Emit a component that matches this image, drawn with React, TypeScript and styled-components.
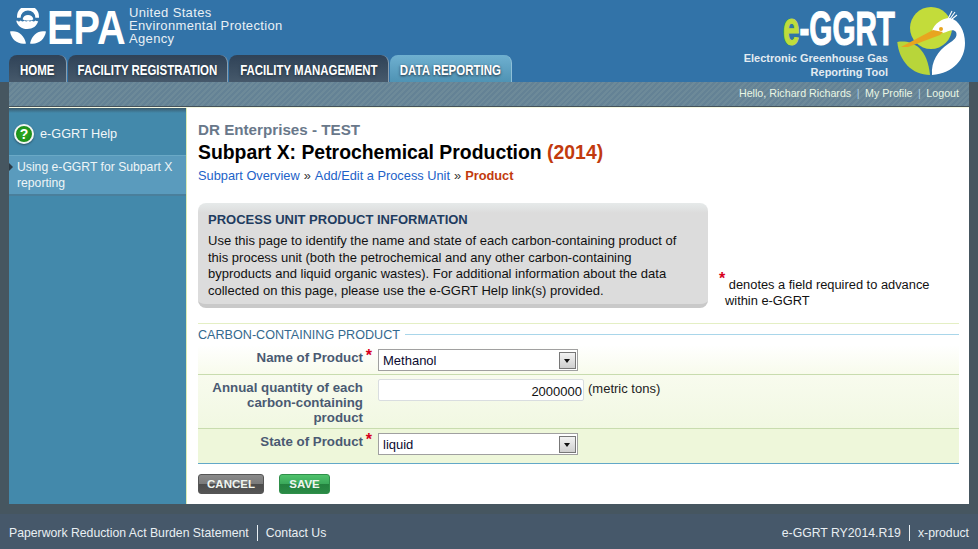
import React from "react";
import styled, { createGlobalStyle } from "styled-components";

const GlobalStyle = createGlobalStyle`
	html, body {
		margin: 0;
		padding: 0;
		background: #465660;
		font-family: "Liberation Sans", Arial, sans-serif;
	}
	* {
		box-sizing: border-box;
	}
`;

const EpaLogo = () => (
	<svg width="120" height="40" viewBox="0 0 120 40">
		<g fill="#fff">
			<path d="M7 8.600a11 11 0 0 1 22 0v1.200h-3.600a7.400 7.400 0 0 0-14.800 0H7Z" />
			<path d="M12.600 11.200a5.600 5.600 0 0 1 10.800 0c-1.600 1-3.400 1.400-5.400 1.400s-3.800-.4-5.400-1.400Z" />
			<path d="M7 12.500c1.500 1.200 2.200 1.200 3.700 0 1.500 1.200 2.300 1.200 3.700 0 1.500 1.200 2.300 1.200 3.700 0 1.500 1.200 2.300 1.200 3.700 0 1.500 1.200 2.300 1.200 3.700 0 1 .8 1.700 1 2.700.6-1.100 5-5.500 8-11 8s-10-3.300-11-8.600c.6.300 1 .2 1.500 0Z" />
			<path d="M0 23.500c7-1.700 14 2.500 16 12-8 1.300-14.500-3.500-16-12Z" />
			<path d="M36 23.500c-7-1.700-14 2.500-16 12 8 1.300 14.500-3.500 16-12Z" />
		</g>
		<text transform="translate(37 35.500) scale(0.81 1)" fontFamily="Liberation Sans" fontWeight="700" fontSize="49" fill="#fff">
			EPA
		</text>
	</svg>
);

const GgrtLogo = () => (
	<svg width="114" height="40" viewBox="0 0 114 40">
		<text transform="translate(1 37) scale(0.605 1)" fontFamily="Liberation Sans" fontWeight="700" fontSize="49" fill="#fff" stroke="#fff" strokeWidth="1.200">
			<tspan fill="#bfdc3c" stroke="#bfdc3c">e</tspan>-GGRT
		</text>
	</svg>
);

const CraneLogo = () => (
	<svg width="82" height="72" viewBox="0 0 82 72">
		<circle cx="35" cy="21" r="21" fill="#c3dc3a" />
		<path d="M1.300 35C14 33 31 38 34 68 16 68 3 54 1.300 35Z" fill="#b8d53a" />
		<path d="M36 68C35 54 42 44 52 37 58 33 62 30 60 25 57 21 52 25 47 26L36 24C38 17 46 11 54 11 63 13 69 24 69 36 69 52 58 66 36 68Z" fill="#fff" />
		<path d="M5 40 37 23 47 25 44 28 12 40Z" fill="#e8a51f" />
		<circle cx="45" cy="22" r="2" fill="#e8a51f" />
		<path d="M52 12 56 4M54 12 59 5M56 12 61 8" stroke="#fff" strokeWidth="1.100" fill="none" />
	</svg>
);

const App = () => {
	return (
		<Page>
			<GlobalStyle />
			<Header>
				<HeaderLeft>
					<AgencyRow>
						<EpaLogo />
						<AgencyName>
							United States
							<br />
							Environmental Protection
							<br />
							Agency
						</AgencyName>
					</AgencyRow>
					<Tabs>
						<Tab $width={58}>
							<TabLabel>HOME</TabLabel>
						</Tab>
						<Tab $width={160}>
							<TabLabel>FACILITY REGISTRATION</TabLabel>
						</Tab>
						<Tab $width={160}>
							<TabLabel>FACILITY MANAGEMENT</TabLabel>
						</Tab>
						<Tab $width={122} $active>
							<TabLabel>DATA REPORTING</TabLabel>
						</Tab>
					</Tabs>
				</HeaderLeft>
				<ToolBrand>
					<GgrtLogo />
					<ToolName>
						Electronic Greenhouse Gas
						<br />
						Reporting Tool
					</ToolName>
				</ToolBrand>
				<CraneWrap>
					<CraneLogo />
				</CraneWrap>
			</Header>

			<UserBar>
				<UserLink>Hello, Richard Richards</UserLink>
				<UserSep>|</UserSep>
				<UserLink>My Profile</UserLink>
				<UserSep>|</UserSep>
				<UserLink>Logout</UserLink>
			</UserBar>

			<Main>
				<Sidebar>
					<HelpRow>
						<HelpIcon>?</HelpIcon>
						<HelpTitle>e-GGRT Help</HelpTitle>
					</HelpRow>
					<HelpItem>Using e-GGRT for Subpart X reporting</HelpItem>
				</Sidebar>

				<Content>
					<Company>DR Enterprises - TEST</Company>
					<Title>
						Subpart X: Petrochemical Production <Year>(2014)</Year>
					</Title>
					<Crumbs>
						<CrumbLink>Subpart Overview</CrumbLink>
						<CrumbSep>»</CrumbSep>
						<CrumbLink>Add/Edit a Process Unit</CrumbLink>
						<CrumbSep>»</CrumbSep>
						<CrumbCurrent>Product</CrumbCurrent>
					</Crumbs>

					<InfoRow>
						<InfoBox>
							<InfoTitle>PROCESS UNIT PRODUCT INFORMATION</InfoTitle>
							<InfoText>
								Use this page to identify the name and state of each carbon-containing product of
								<br />
								this process unit (both the petrochemical and any other carbon-containing
								<br />
								byproducts and liquid organic wastes). For additional information about the data
								<br />
								collected on this page, please use the e-GGRT Help link(s) provided.
							</InfoText>
						</InfoBox>
						<RequiredNote>
							<NoteStar>*</NoteStar> denotes a field required to advance
							<br />
							within e-GGRT
						</RequiredNote>
					</InfoRow>

					<Section>
						<Legend>
							<LegendText>CARBON-CONTAINING PRODUCT</LegendText>
							<LegendLine />
						</Legend>
						<FormRow $height={30} $tone="first">
							<FieldLabel>
								Name of Product<Star>*</Star>
							</FieldLabel>
							<SelectBox>
								<SelectValue>Methanol</SelectValue>
								<SelectArrow />
							</SelectBox>
						</FormRow>
						<FormRow $height={54} $tone="middle">
							<FieldLabel>Annual quantity of each carbon-containing product</FieldLabel>
							<QuantityInput defaultValue="2000000" readOnly />
							<Unit>(metric tons)</Unit>
						</FormRow>
						<FormRow $height={35} $tone="last">
							<FieldLabel>
								State of Product<Star>*</Star>
							</FieldLabel>
							<SelectBox>
								<SelectValue>liquid</SelectValue>
								<SelectArrow />
							</SelectBox>
						</FormRow>
					</Section>

					<Buttons>
						<ActionButton $width={66}>CANCEL</ActionButton>
						<ActionButton $width={51} $save>
							SAVE
						</ActionButton>
					</Buttons>
				</Content>
			</Main>

			<Footer>
				<FooterGroup>
					<FooterLink>Paperwork Reduction Act Burden Statement</FooterLink>
					<FooterSep />
					<FooterLink>Contact Us</FooterLink>
				</FooterGroup>
				<FooterGroup>
					<FooterLink>e-GGRT RY2014.R19</FooterLink>
					<FooterSep />
					<FooterLink>x-product</FooterLink>
				</FooterGroup>
			</Footer>
		</Page>
	);
};

export default App;

const Page = styled.div`
	width: 978px;
	height: 549px;
	overflow: hidden;
	display: flex;
	flex-direction: column;
	background: #465660;
`;

const Header = styled.div`
	height: 82px;
	flex: none;
	display: flex;
	background: #3273a8;
	padding-left: 9px;
`;

const HeaderLeft = styled.div`
	width: 730px;
	flex: none;
	display: flex;
	flex-direction: column;
	justify-content: space-between;
`;

const AgencyRow = styled.div`
	display: flex;
	padding: 8px 0 0 1px;
`;

const AgencyName = styled.div`
	margin: -2px 0 0 -1px;
	font-size: 13px;
	line-height: 13px;
	letter-spacing: 0.35px;
	color: #e9f0f5;
`;

const Tabs = styled.div`
	display: flex;
	gap: 1px;
`;

const Tab = styled.div<{ $width: number; $active?: boolean }>`
	width: ${(p) => p.$width}px;
	height: 27px;
	padding-top: 2px;
	display: flex;
	align-items: center;
	justify-content: center;
	border-radius: 8px 8px 0 0;
	border-right: 1px solid ${(p) => (p.$active ? "#8fc0d8" : "#8a9eae")};
	background: ${(p) =>
		p.$active
			? "linear-gradient(#6fb0d0, #4f93b4)"
			: "linear-gradient(#2f4257, #46596b)"};
`;

const TabLabel = styled.span`
	flex: none;
	transform: scaleX(0.74);
	color: #fff;
	font-size: 15.500px;
	font-weight: 700;
	white-space: nowrap;
	text-shadow: 0 1px 3px #1c2c3a;
`;

const ToolBrand = styled.div`
	width: 150px;
	flex: none;
	padding-top: 8px;
	display: flex;
	flex-direction: column;
	align-items: flex-end;

	svg {
		margin-right: -7px;
		flex: none;
	}
`;

const ToolName = styled.div`
	margin-top: 3px;
	margin-right: 1px;
	text-align: right;
	font-size: 11px;
	font-weight: 700;
	line-height: 14px;
	white-space: nowrap;
	color: #e3ebf1;
`;

const CraneWrap = styled.div`
	margin-left: 7px;
	padding-top: 7px;
`;

const UserBar = styled.div`
	height: 25px;
	flex: none;
	margin: 0 9px;
	padding: 0 10px 2px 0;
	display: flex;
	align-items: center;
	justify-content: flex-end;
	gap: 5.500px;
	border-bottom: 1px solid #44525a;
	background: repeating-linear-gradient(135deg, #6d8a99 0 2px, #648295 2px 4px);
	font-size: 10.700px;
`;

const UserLink = styled.span`
	color: #e9f6e4;
`;

const UserSep = styled.span`
	color: #a7d0e6;
`;

const Main = styled.div`
	height: 397px;
	flex: none;
	margin: 0 9px;
	display: flex;
	border-top: 1px solid #f4f8e2;
	background: #fff;
`;

const Sidebar = styled.div`
	width: 178px;
	flex: none;
	border-right: 1px solid #dcebb4;
	background: linear-gradient(#3a5a6c 0, #4389ab 5px, #4389ab 100%);
`;

const HelpRow = styled.div`
	height: 47px;
	padding: 4px 0 0 5px;
	display: flex;
	align-items: center;
	gap: 6px;
`;

const HelpIcon = styled.div`
	width: 20px;
	height: 20px;
	display: flex;
	align-items: center;
	justify-content: center;
	border: 2px solid #f2f5f2;
	border-radius: 50%;
	background: radial-gradient(#36b024, #0f7f14);
	box-shadow: 0 1px 2px #2a4f60;
	color: #fff;
	font-size: 14px;
	font-weight: 700;
`;

const HelpTitle = styled.div`
	color: #f2f7f8;
	font-size: 12.700px;
`;

const HelpItem = styled.div`
	position: relative;
	height: 41px;
	padding: 3px 10px 0 8px;
	border-top: 1px solid #6aa9c6;
	border-bottom: 2px solid #4a7f9b;
	background: #5a9bbd;
	color: #eef5f7;
	font-size: 12.200px;
	line-height: 16px;

	&::before {
		content: "";
		position: absolute;
		left: 0;
		top: 7px;
		border: 4px solid transparent;
		border-left-color: #2c3a44;
	}
`;

const Content = styled.div`
	flex: 1;
	min-width: 0;
	padding: 14px 10px 0 11px;
`;

const Company = styled.div`
	color: #69788a;
	font-size: 15.200px;
	font-weight: 700;
	line-height: 16px;
`;

const Title = styled.div`
	margin-top: 3px;
	color: #000;
	font-size: 19.400px;
	font-weight: 700;
	line-height: 23px;
	white-space: nowrap;
`;

const Year = styled.span`
	color: #c23a0e;
`;

const Crumbs = styled.div`
	margin-top: 4px;
	display: flex;
	align-items: center;
	gap: 4px;
	font-size: 12.800px;
	line-height: 16px;
`;

const CrumbLink = styled.span`
	color: #1c62c8;
`;

const CrumbSep = styled.span`
	color: #333;
`;

const CrumbCurrent = styled.span`
	color: #c23a0e;
	font-weight: 700;
`;

const InfoRow = styled.div`
	margin-top: 19px;
	display: flex;
	align-items: flex-end;
`;

const InfoBox = styled.div`
	width: 510px;
	height: 105px;
	flex: none;
	padding: 9px 10px 0;
	border-radius: 8px;
	border-bottom: 4px solid #c9c9c9;
	background: linear-gradient(#e6eaea, #dcdcdc 10px);
`;

const InfoTitle = styled.div`
	color: #1f3c60;
	font-size: 13px;
	font-weight: 700;
	line-height: 16px;
`;

const InfoText = styled.div`
	margin-top: 5px;
	color: #111;
	font-size: 13px;
	line-height: 16.600px;
	white-space: nowrap;
`;

const RequiredNote = styled.div`
	margin: 0 0 -1px 11px;
	padding-left: 6px;
	color: #111;
	font-size: 12.850px;
	line-height: 16px;
	text-indent: -6px;
`;

const NoteStar = styled.span`
	position: relative;
	top: -5px;
	color: #d8001c;
	font-size: 16px;
	font-weight: 700;
	line-height: 0;
`;

const Section = styled.div`
	margin-top: 15px;
	border-top: 1px solid #e4efc4;
`;

const Legend = styled.div`
	height: 21px;
	display: flex;
	align-items: center;
	gap: 5px;
`;

const LegendText = styled.div`
	color: #34698e;
	font-size: 12.600px;
	white-space: nowrap;
`;

const LegendLine = styled.div`
	flex: 1;
	height: 1px;
	background: #a9d6ea;
`;

const rowBackgrounds = {
	first: "linear-gradient(#fff, #f8fbec)",
	middle: "linear-gradient(#f8fbee, #f1f8e2)",
	last: "#eef7da",
};

const FormRow = styled.div<{ $height: number; $tone: "first" | "middle" | "last" }>`
	height: ${(p) => p.$height}px;
	padding-top: 4px;
	display: flex;
	align-items: flex-start;
	border-bottom: 1px solid ${(p) => (p.$tone === "last" ? "#62a8c8" : "#c8dcae")};
	background: ${(p) => rowBackgrounds[p.$tone]};
`;

const FieldLabel = styled.div`
	position: relative;
	width: 165px;
	flex: none;
	margin-right: 15px;
	padding-top: 1px;
	color: #4a5a72;
	font-size: 13.300px;
	font-weight: 700;
	line-height: 15px;
	text-align: right;
`;

const Star = styled.span`
	position: absolute;
	right: -9px;
	top: -1px;
	color: #d8001c;
	font-size: 16px;
`;

const SelectBox = styled.div`
	width: 200px;
	height: 22px;
	flex: none;
	display: flex;
	align-items: center;
	padding: 0 1px 0 4px;
	border: 1px solid #a0a0a0;
	background: #fff;
`;

const SelectValue = styled.div`
	flex: 1;
	color: #0a0a30;
	font-size: 13px;
`;

const SelectArrow = styled.div`
	position: relative;
	width: 17px;
	height: 17px;
	border: 1px solid #777;
	background: linear-gradient(#f2f2f2, #cfcfcf);

	&::after {
		content: "";
		position: absolute;
		left: 4px;
		top: 6px;
		border: 3.500px solid transparent;
		border-top: 4px solid #111;
		border-bottom: 0;
	}
`;

const QuantityInput = styled.input`
	width: 206px;
	height: 22px;
	flex: none;
	padding: 2px 1px 0 0;
	border: 1px solid #d9dde0;
	border-radius: 2px;
	background: #fff;
	color: #111;
	font-family: "Liberation Sans", Arial, sans-serif;
	font-size: 13px;
	text-align: right;
	outline: none;
`;

const Unit = styled.div`
	margin: 2px 0 0 4px;
	color: #222;
	font-size: 13px;
`;

const Buttons = styled.div`
	margin-top: 10px;
	display: flex;
	gap: 15px;
`;

const ActionButton = styled.button<{ $width: number; $save?: boolean }>`
	width: ${(p) => p.$width}px;
	height: 20px;
	padding: 0;
	border: 1px solid ${(p) => (p.$save ? "#2f8f4a" : "#555")};
	border-radius: 3px;
	background: ${(p) =>
		p.$save
			? "linear-gradient(#4fc26c 0, #3aa85a 50%, #23813f 50%, #2a8a45 100%)"
			: "linear-gradient(#8a8a8a 0, #7a7a7a 50%, #4c4c4c 50%, #555 100%)"};
	color: #f0f5ef;
	font-family: "Liberation Sans", Arial, sans-serif;
	font-size: 11.500px;
	font-weight: 700;
`;

const Footer = styled.div`
	margin-top: 10px;
	flex: 1;
	padding: 3px 9px 0;
	display: flex;
	align-items: center;
	justify-content: space-between;
	background: #46586a;
`;

const FooterGroup = styled.div`
	display: flex;
	align-items: center;
	gap: 8px;
`;

const FooterLink = styled.span`
	color: #e9eff3;
	font-size: 12.250px;
`;

const FooterSep = styled.span`
	width: 1px;
	height: 16px;
	background: #e9eff3;
`;
